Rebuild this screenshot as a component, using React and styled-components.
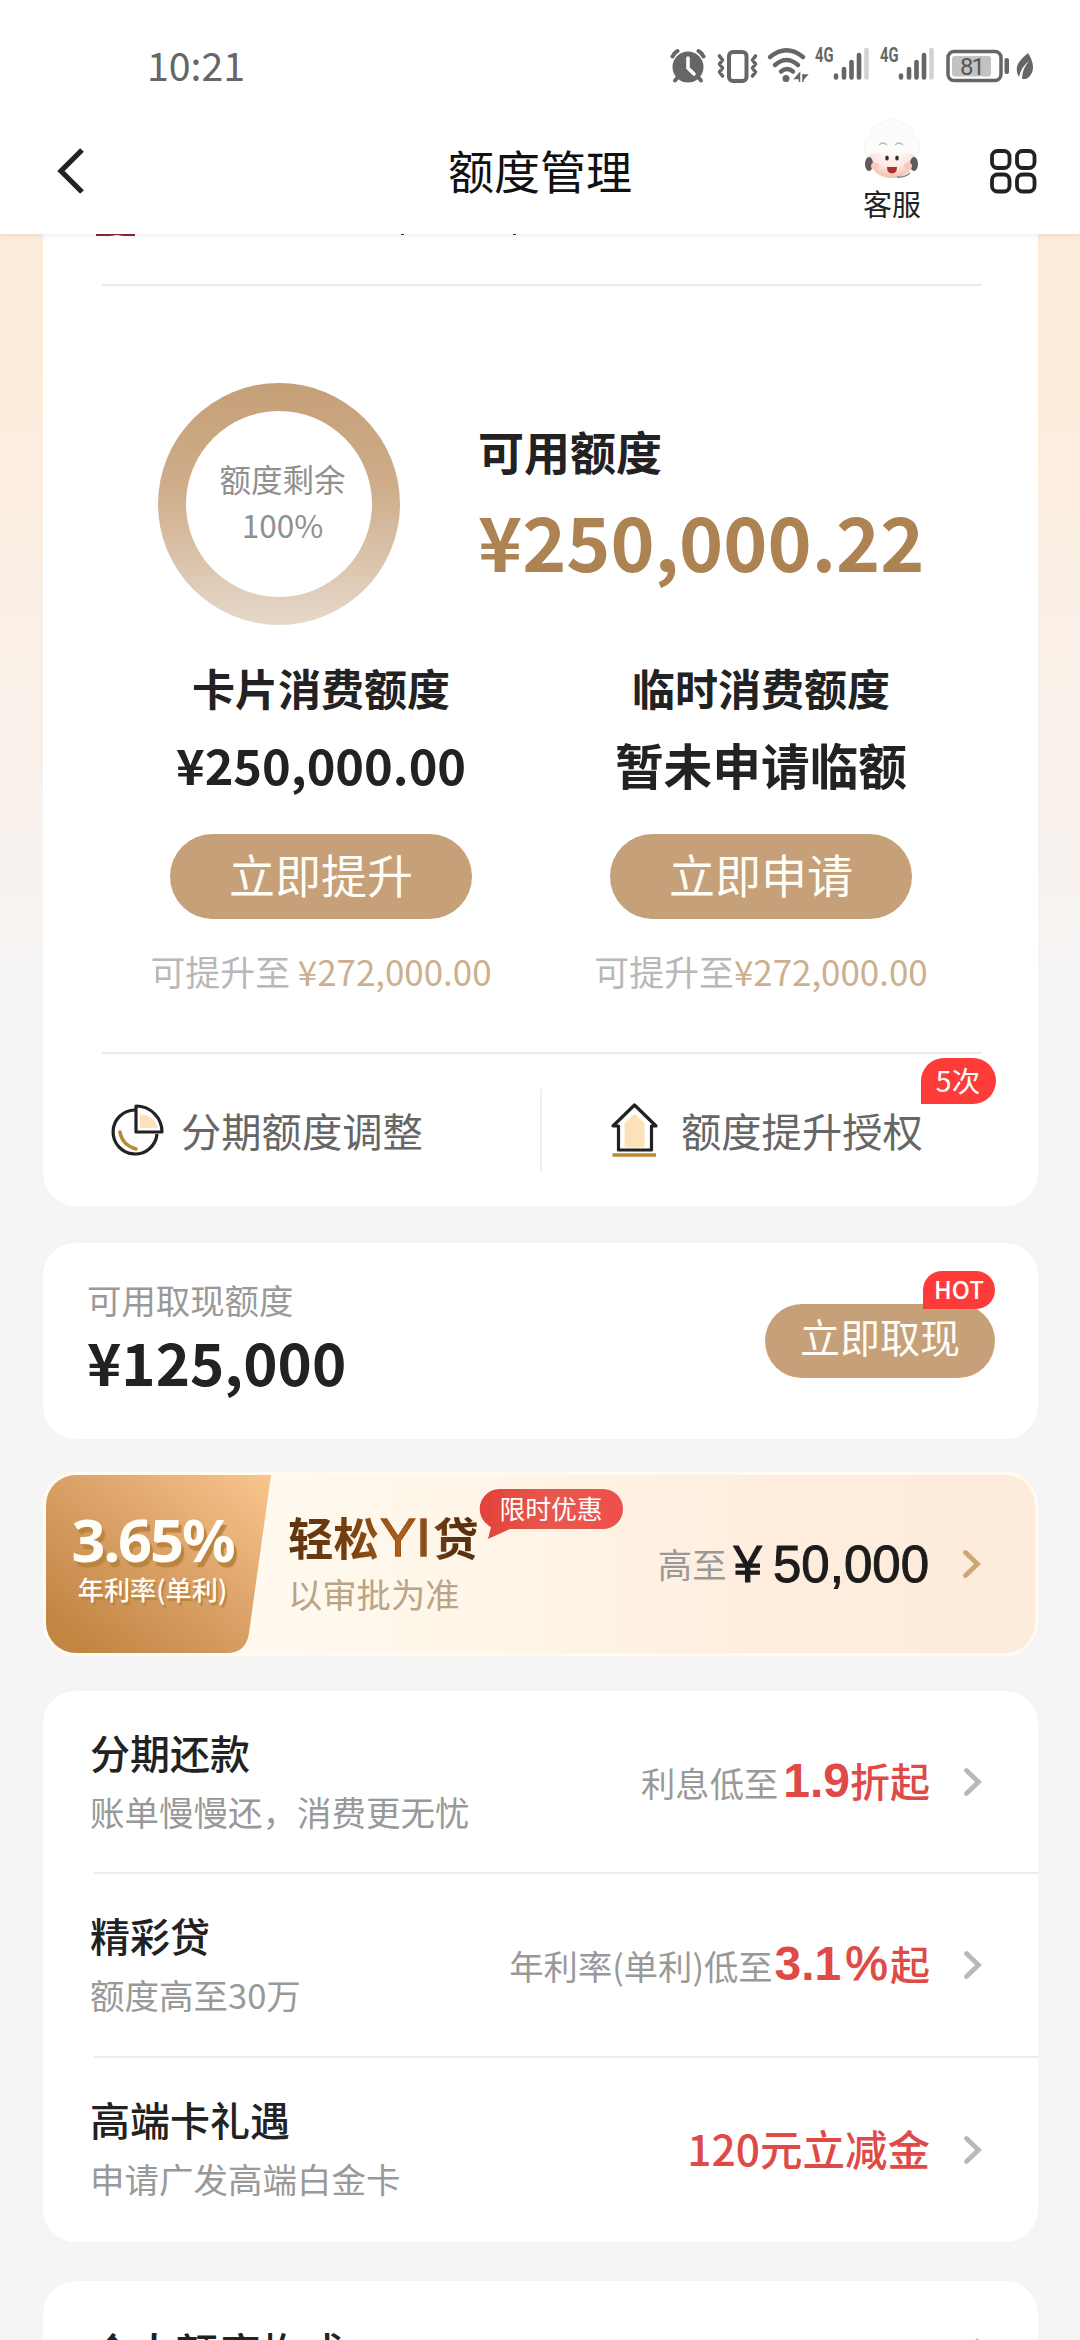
import React from 'react';
import styled, { createGlobalStyle, css } from 'styled-components';

const Global = createGlobalStyle`
  * { box-sizing: border-box; }
  html, body { margin: 0; padding: 0; }
  body { width: 1080px; height: 2340px; overflow: hidden; background: #f5f5f5; }
`;

const sans = `"Noto Sans CJK SC", "Noto Sans", sans-serif`;
const helv = `"Liberation Sans", "Noto Sans CJK SC", sans-serif`;

const Screen = styled.div`
  width: 1080px;
  height: 2340px;
  overflow: hidden;
  display: flex;
  flex-direction: column;
  font-family: ${sans};
  color: #222;
  background: linear-gradient(180deg, #fcead9 0, #fdecdc 400px, #faf0e8 640px, #f9f0ea 760px, #f5f5f5 1010px);
`;

const Top = styled.header`
  flex: none;
  height: 234px;
  background: #fff;
  z-index: 1;
  box-shadow: 0 1px 8px rgba(0, 0, 0, 0.08);
`;

const StatusBar = styled.div`
  height: 108px;
  padding: 24px 44px 0 147px;
  display: flex;
  justify-content: space-between;
`;

const Clock = styled.div`
  font-family: "Noto Sans CJK SC", sans-serif;
  font-size: 39.3px;
  line-height: 80px;
  height: 80px;
  color: #666;
`;

const StatusIcons = styled.svg`
  width: 366px;
  height: 60px;
  margin-top: 14px;
`;

const NavBar = styled.div`
  height: 126px;
  display: grid;
  grid-template-columns: 1fr 240px 1fr;
  align-items: center;
`;

const Back = styled.svg`
  width: 32px;
  height: 50px;
  margin: 0 0 0 54px;
`;

const PageTitle = styled.div`
  text-align: center;
  font-size: 46px;
  line-height: 60px;
  padding-bottom: 5px;
  color: #111;
`;

const NavActions = styled.div`
  display: flex;
  justify-content: flex-end;
  align-items: center;
  gap: 66px;
  padding-right: 43px;
`;

const Service = styled.div`
  width: 62px;
  height: 108px;
  display: flex;
  flex-direction: column;
  align-items: center;
  font-size: 29px;
  line-height: 40px;
  color: #222;
  white-space: nowrap;
`;

const MascotArt = styled.svg`
  display: block;
  flex: none;
  width: 62px;
  height: 66px;
`;

const Body = styled.main`
  flex: 1;
  min-height: 0;
  padding: 0 42px 0 43px;
  display: flex;
  flex-direction: column;
`;

const Card = styled.section`
  flex: none;
  background: #fff;
  border-radius: ${p => (p.$flat ? '0 0 33px 33px' : '33px')};
  height: ${p => p.$h}px;
  margin-bottom: ${p => p.$gap}px;
`;

const Peek = styled.div`
  height: 50px;
  svg { display: block; }
`;

const Rule = styled.div`
  height: 2px;
  background: #ebebeb;
  margin: 0 56px 0 59px;
`;

const Overview = styled.div`
  height: 369px;
  padding: 97px 0 0 115px;
  display: flex;
`;

const Ring = styled.div`
  flex: none;
  width: 242px;
  height: 242px;
  padding: 28px;
  border-radius: 50%;
  background: linear-gradient(180deg, #c59f77 0%, #cfae8c 45%, #e6d8ca 100%);
`;

const RingHole = styled.div`
  width: 186px;
  height: 186px;
  border-radius: 50%;
  background: #fff;
  padding: 44px 0 0 7px;
  text-align: center;
  font-size: 31.5px;
  line-height: 46px;
  color: #909090;
`;

const Available = styled.div`
  padding: 32px 0 0 78px;
`;

const AvailableLabel = styled.div`
  font-size: 46px;
  font-weight: 700;
  line-height: 70px;
`;

const AvailableSum = styled.div`
  font-size: 74.9px;
  font-weight: 700;
  line-height: 112px;
  margin-top: -1px;
  color: #ad8354;
`;

const Limits = styled.div`
  height: 397px;
  padding: 0 57px 0 58px;
  display: grid;
  grid-template-columns: 440px 440px;
`;

const Limit = styled.div`
  display: flex;
  flex-direction: column;
  align-items: center;
`;

const LimitName = styled.div`
  font-size: 43px;
  font-weight: 700;
  line-height: 64px;
`;

const LimitValue = styled.div`
  font-size: 48.7px;
  font-weight: 700;
  line-height: 72px;
  margin-top: 9px;
`;

const Pill = styled.div`
  border-radius: 50px;
  background: #c5a079;
  color: #fffdf6;
  text-align: center;
  ${p => p.$small
    ? css`width: 230px; height: 74px; font-size: 40px; line-height: 65px;`
    : css`width: 302px; height: 85px; font-size: 46px; line-height: 79px; margin-top: 34px;`}
`;

const Note = styled.div`
  font-size: 34.9px;
  line-height: 50px;
  margin-top: 27px;
  color: #b8b8b8;
  white-space: pre;
  b { font-weight: 400; color: #cbb08f; }
`;

const Shortcuts = styled.div`
  height: 152px;
  display: flex;
  align-items: center;
  position: relative;
`;

const Shortcut = styled.div`
  display: flex;
  align-items: center;
  padding-left: ${p => p.$left}px;
  width: ${p => p.$w}px;
  gap: ${p => p.$gap}px;
  font-size: 40.3px;
  line-height: 60px;
  color: #666;
  white-space: nowrap;
`;

const VRule = styled.div`
  width: 2px;
  height: 82px;
  background: #efefef;
`;

const Badge = styled.div`
  position: absolute;
  right: ${p => p.$right}px;
  top: ${p => p.$top}px;
  width: ${p => p.$w}px;
  height: ${p => p.$h}px;
  line-height: ${p => p.$h - 2}px;
  font-size: ${p => p.$size}px;
  font-weight: ${p => p.$weight || 400};
  text-align: center;
  color: #fff;
  background: #fd3b39;
  border-radius: 23px 23px 23px 0;
`;

const CashRow = styled.div`
  height: 100%;
  display: flex;
  justify-content: space-between;
  padding: 32px 43px 0 44px;
  position: relative;
`;

const CashLabel = styled.div`
  font-size: 34.4px;
  line-height: 48px;
  color: #999;
`;

const CashSum = styled.div`
  font-size: 58.2px;
  font-weight: 700;
  line-height: 76px;
`;

const CashAction = styled.div`
  padding-top: 29px;
`;

const Promo = styled(Card)`
  background: linear-gradient(90deg, #fffaf0 20%, #fff4e6 50%, #feeddd 75%, #fdebdb 100%);
  border: 3px solid #fffaf2;
  display: flex;
  position: relative;
  overflow: hidden;
`;

const Rate = styled.div`
  width: 225px;
  flex: none;
  display: grid;
  > * { grid-area: 1 / 1; }
  svg { display: block; }
`;

const RateText = styled.div`
  padding: 32px 12px 0 0;
  text-align: center;
  color: #fffdf8;
  z-index: 1;
`;

const RateValue = styled.div`
  font-family: "Noto Sans", "Open Sans", sans-serif;
  font-weight: 700;
  font-size: 59.5px;
  line-height: 64px;
  letter-spacing: -2.1px;
  text-shadow: 3px 5px 1px #bb8440;
`;

const RateName = styled.div`
  font-size: 26.2px;
  font-weight: 500;
  line-height: 36px;
  text-shadow: 2px 3px 1px #bb8440;
`;

const PromoText = styled.div`
  padding: 28px 0 0 17px;
`;

const PromoName = styled.div`
  font-size: 45.5px;
  font-weight: 700;
  line-height: 66px;
  height: 66px;
  white-space: nowrap;
  background: linear-gradient(90deg, #5e340f, #723f11 30%, #ad611f 60%, #5c3110 85%);
  background-clip: text;
  -webkit-background-clip: text;
  color: transparent;
  span {
    font-family: ${helv};
    font-weight: 400;
    font-size: 54px;
    line-height: 1;
    margin: 0 2px 0 1px;
    -webkit-text-stroke: 1px #9a5419;
  }
`;

const PromoSub = styled.div`
  font-size: 34.3px;
  line-height: 48px;
  color: #b9a485;
`;

const Bubble = styled.div`
  position: absolute;
  left: 433px;
  top: 14px;
  width: 144px;
  height: 50px;
  display: grid;
  text-align: center;
  font-size: 25.8px;
  line-height: 38px;
  color: #fff;
  > * { grid-area: 1 / 1; }
  span { z-index: 1; }
`;

const Trail = styled.div`
  margin-left: auto;
  display: flex;
  align-items: center;
  gap: ${p => p.$gap || 0}px;
  padding-right: ${p => p.$pr}px;
  white-space: nowrap;
`;

const Amount = styled.div`
  display: flex;
  align-items: ${p => (p.$center ? 'center' : 'baseline')};
  font-size: 34.3px;
  line-height: 60px;
  padding-bottom: ${p => p.$lift || 0}px;
  color: #999;
`;

const Big = styled.span`
  font-family: ${helv};
  font-size: 51px;
  color: #1c1c1c;
  -webkit-text-stroke: 1px #1c1c1c;
  margin-left: 7px;
  padding-top: 4px;
  word-spacing: -3px;
`;

const Hot = styled.span`
  font-family: ${p => (p.$cjk ? sans : helv)};
  font-size: ${p => p.$size || 40}px;
  font-weight: 500;
  color: #df4a46;
  margin-left: ${p => p.$ml || 0}px;
  em { font-style: normal; font-size: 48px; font-weight: 700; }
  i {
    font-style: normal;
    font-size: 48px;
    font-weight: 400;
    margin: 0 2px 0 4px;
    -webkit-text-stroke: 1px #df4a46;
  }
`;

const Row = styled.div`
  height: ${p => p.$h}px;
  margin-left: 51px;
  display: flex;
  border-bottom: ${p => (p.$last ? 0 : 2)}px solid #ededed;
`;

const RowText = styled.div`
  padding-top: 31px;
  margin-left: -4px;
`;

const RowTitle = styled.div`
  font-size: 40px;
  font-weight: 500;
  line-height: 60px;
  color: #222;
`;

const RowSub = styled.div`
  font-size: 34.5px;
  line-height: 59px;
  color: #999;
`;

const LastRow = styled.div`
  display: flex;
  justify-content: space-between;
  padding: 38px 44px 0 48px;
  font-size: 42.3px;
  font-weight: 500;
  line-height: 64px;
`;

const Chevron = ({ color = '#b9b9b9' }) => (
  <svg width="20" height="30" viewBox="0 0 20 30" fill="none">
    <path d="M3.500 3.500 15.500 15 3.500 26.500" stroke={color} strokeWidth="4.800" strokeLinecap="round" />
  </svg>
);

const Signal = ({ x }) => (
  <g transform={`translate(${x} 0)`}>
    <text x="-18" y="24" fontFamily="Roboto, sans-serif" fontWeight="700" fontSize="20.500" textLength="18.500" lengthAdjust="spacingAndGlyphs" fill="#666">4G</text>
    <g strokeWidth="4.600" strokeLinecap="round" stroke="#666">
      <path d="M3 37.500v2M11 31v8.500M18.500 24v15.500M26 17v22.500" />
      <path d="M33.500 12v27.500" stroke="#d2d2d2" />
    </g>
  </g>
);

const Status = () => (
  <StatusIcons viewBox="670 38 366 60" fill="none">
    <g transform="translate(1 38)">
      <circle cx="687" cy="29" r="15.500" fill="#666" />
      <path d="M687 20v10l6 6" stroke="#fff" strokeWidth="3.600" strokeLinecap="round" />
      <path d="M671.500 18.500q1.500-3.500 5-5.500M702.500 18.500q-1.500-3.500-5-5.500" stroke="#666" strokeWidth="4" strokeLinecap="round" />
      <path d="M677 39l-3 3.500M697 39l3 3.500" stroke="#666" strokeWidth="4" strokeLinecap="round" />
      <rect x="728" y="14" width="17.500" height="29" rx="4" stroke="#666" strokeWidth="4" />
      <path d="M718.500 18l3 4-3 4 3 4-3 4 3 4M754.500 18l-3 4 3 4-3 4 3 4-3 4" stroke="#666" strokeWidth="3.600" strokeLinecap="round" strokeLinejoin="round" />
      <g stroke="#666" strokeWidth="4.400" strokeLinecap="round">
        <path d="M769 19q16.500-13.500 33 0M774 27q11.500-10 23 0M780 33.500q6-5 12 0" />
      </g>
      <circle cx="785" cy="40.500" r="3.500" fill="#666" />
      <path d="M798.500 35v9M794 40.500h4.500v-5zM802 44v-8M802 37h4l-4 4.500z" fill="#666" stroke="#666" strokeWidth="1.500" />
    </g>
    <g transform="translate(0 38)">
      <Signal x={833} />
      <Signal x={898} />
      <rect x="948" y="13.500" width="53" height="29" rx="6" stroke="#666" strokeWidth="3.500" />
      <rect x="952" y="18" width="39" height="20.500" rx="3" fill="#c2c2c2" />
      <text x="960" y="37" fontFamily="Roboto, sans-serif" fontWeight="400" fontSize="24" textLength="25" fill="#555">81</text>
      <rect x="1004.500" y="20" width="4.500" height="16" rx="2" fill="#666" />
      <path d="M1028 15c6 9 8 20-2 26h-4q0-10 7-18-8 6-10 16c-6-11 1-17 9-24z" fill="#666" />
    </g>
  </StatusIcons>
);

const Mascot = () => (
  <MascotArt viewBox="0 3 62 66">
    <defs>
      <radialGradient id="face" cx="50%" cy="30%" r="70%">
        <stop offset="0" stopColor="#fffaf8" />
        <stop offset="0.600" stopColor="#fdeae3" />
        <stop offset="1" stopColor="#f3bfae" />
      </radialGradient>
    </defs>
    <ellipse cx="31" cy="44" rx="23" ry="20" fill="url(#face)" />
    <path d="M7 43C0 35 4 26 9 23 7 14 15 9 21 10 25 3 37 3 41 10c7-1 14 5 12 13 6 4 8 13 2 20-3-4-8-4-11-4-9 4-18 4-26 0-4 0-8 0-11 4z" fill="#fefcfb" stroke="#f9f3f2" strokeWidth="1" />
    <path d="M18 31q4-4 8 0M34 31q4-4 8 0" fill="none" stroke="#bbb" strokeWidth="1.300" />
    <ellipse cx="8" cy="50" rx="4" ry="7" fill="#5d5b60" />
    <ellipse cx="53" cy="50" rx="4" ry="7" fill="#5d5b60" />
    <ellipse cx="14" cy="52" rx="4" ry="3.500" fill="#f9c9bf" />
    <ellipse cx="47" cy="52" rx="4" ry="3.500" fill="#f9c9bf" />
    <ellipse cx="26" cy="44" rx="1.800" ry="2.500" fill="#333" />
    <ellipse cx="36" cy="44" rx="1.800" ry="2.500" fill="#333" />
    <path d="M26 53h10q0 6.500-5 6.500t-5-6.500z" fill="#a9302c" />
    <path d="M36 63q7 1 13-4" stroke="#888" strokeWidth="1.500" fill="none" />
  </MascotArt>
);

const rows = [
  { title: '分期还款', sub: '账单慢慢还，消费更无忧', h: 183, value: <>利息低至<Hot $ml={5}><em>1.9</em>折起</Hot></> },
  { title: '精彩贷', sub: '额度高至30万', h: 184, value: <>年利率(单利)低至<Hot $ml={2}><em>3.1</em><i>%</i>起</Hot></> },
  { title: '高端卡礼遇', sub: '申请广发高端白金卡', h: 184, last: true, lift: 5, value: <Hot $cjk $size={42.5}>120元立减金</Hot> },
];

export default function App() {
  return (
    <>
      <Global />
      <Screen>
        <Top>
          <StatusBar>
            <Clock>10:21</Clock>
            <Status />
          </StatusBar>
          <NavBar>
            <Back viewBox="0 0 32 50" fill="none">
              <path d="M28 4 7 25 28 46" stroke="#222" strokeWidth="5.300" />
            </Back>
            <PageTitle>额度管理</PageTitle>
            <NavActions>
              <Service>
                <Mascot />
                客服
              </Service>
              <svg width="48" height="46" viewBox="0 0 48 46" fill="none" stroke="#222" strokeWidth="3.800">
                <rect x="3" y="3" width="17.500" height="17" rx="5.500" />
                <rect x="28" y="3" width="17.500" height="17" rx="5.500" />
                <rect x="3" y="26.500" width="17.500" height="17" rx="5.500" />
                <rect x="28" y="26.500" width="17.500" height="17" rx="5.500" />
              </svg>
            </NavActions>
          </NavBar>
        </Top>
        <Body>
          <Card $flat $h={972} $gap={37}>
            <Peek>
              <svg width="500" height="4" viewBox="0 0 500 4">
                <path d="M53 0h39v2H80l-6-1-7 1H53z" fill="#8e2530" />
                <rect x="358" width="3" height="1" fill="#333" />
                <rect x="470" width="3" height="1" fill="#333" />
              </svg>
            </Peek>
            <Rule />
            <Overview>
              <Ring><RingHole>额度剩余<br />100%</RingHole></Ring>
              <Available>
                <AvailableLabel>可用额度</AvailableLabel>
                <AvailableSum>¥250,000.22</AvailableSum>
              </Available>
            </Overview>
            <Limits>
              <Limit>
                <LimitName>卡片消费额度</LimitName>
                <LimitValue>¥250,000.00</LimitValue>
                <Pill>立即提升</Pill>
                <Note>可提升至 <b>¥272,000.00</b></Note>
              </Limit>
              <Limit>
                <LimitName>临时消费额度</LimitName>
                <LimitValue>暂未申请临额</LimitValue>
                <Pill>立即申请</Pill>
                <Note>可提升至<b>¥272,000.00</b></Note>
              </Limit>
            </Limits>
            <Rule />
            <Shortcuts>
              <Shortcut $left={68} $w={497} $gap={16}>
                <svg width="54" height="54" viewBox="0 0 54 54" fill="none">
                  <path d="M24 7A22 22 0 1 0 46 31" stroke="#222" strokeWidth="3.200" />
                  <path d="M25 3v26h26A26 26 0 0 0 25 3z" stroke="#222" strokeWidth="3.200" strokeLinejoin="round" />
                  <path d="M29 11v14h18A20 20 0 0 0 29 11z" fill="#fde1b8" />
                  <path d="M9 29q2 13 16 17" stroke="#b98a34" strokeWidth="3.400" strokeLinecap="round" />
                </svg>
                分期额度调整
              </Shortcut>
              <VRule />
              <Shortcut $left={67} $w={440} $gap={22}>
                <svg width="50" height="56" viewBox="0 0 50 56" fill="none">
                  <path d="M25.500 3 4 24h5.500v24h33V24H47z" stroke="#222" strokeWidth="3.200" strokeLinejoin="round" />
                  <path d="M25.500 12 15.500 21v24.500h20V21z" fill="#fde1b8" />
                  <path d="M3.500 53h43.500" stroke="#b98a34" strokeWidth="3.600" />
                </svg>
                额度提升授权
              </Shortcut>
              <Badge $right={42.5} $top={4} $w={75} $h={46} $size={28.5}>5次</Badge>
            </Shortcuts>
          </Card>

          <Card $h={196} $gap={33}>
            <CashRow>
              <div>
                <CashLabel>可用取现额度</CashLabel>
                <CashSum>¥125,000</CashSum>
              </div>
              <CashAction><Pill $small>立即取现</Pill></CashAction>
              <Badge $right={43} $top={28} $w={72} $h={38} $size={24} $weight={500}>HOT</Badge>
            </CashRow>
          </Card>

          <Promo $h={184} $gap={35}>
            <Rate>
              <svg width="225" height="178" viewBox="0 0 225 178">
                <defs>
                  <linearGradient id="gold" x1="0" y1="1" x2="1" y2="0">
                    <stop offset="0.100" stopColor="#c28643" />
                    <stop offset="0.550" stopColor="#dca369" />
                    <stop offset="1" stopColor="#f8c68e" />
                  </linearGradient>
                </defs>
                <path d="M0 0h225l-22 158q-3 20-22 20H0z" fill="url(#gold)" />
              </svg>
              <RateText>
                <RateValue>3.65%</RateValue>
                <RateName>年利率(单利)</RateName>
              </RateText>
            </Rate>
            <PromoText>
              <PromoName>轻松<span>YI</span>贷</PromoName>
              <PromoSub>以审批为准</PromoSub>
            </PromoText>
            <Bubble>
              <svg width="144" height="50" viewBox="0 0 144 50">
                <defs>
                  <linearGradient id="red" x1="0" x2="1">
                    <stop offset="0" stopColor="#e2423a" />
                    <stop offset="0.500" stopColor="#e8584c" />
                    <stop offset="1" stopColor="#ee4f4b" />
                  </linearGradient>
                </defs>
                <path d="M20 0h104a20 20 0 0 1 0 40H31L9 50l3-12A20 20 0 0 1 20 0z" fill="url(#red)" />
              </svg>
              <span>限时优惠</span>
            </Bubble>
            <Trail $gap={33} $pr={53}>
              <Amount $center $lift={2}>高至<Big>¥ 50,000</Big></Amount>
              <Chevron color="#cda876" />
            </Trail>
          </Promo>

          <Card $h={551} $gap={39}>
            {rows.map(r => (
              <Row key={r.title} $h={r.h} $last={r.last}>
                <RowText>
                  <RowTitle>{r.title}</RowTitle>
                  <RowSub>{r.sub}</RowSub>
                </RowText>
                <Trail $gap={33} $pr={55}>
                  <Amount $lift={r.lift}>{r.value}</Amount>
                  <Chevron />
                </Trail>
              </Row>
            ))}
          </Card>

          <Card $h={200} $gap={0}>
            <LastRow>
              <span>个人额度构成</span>
              <svg width="34" height="42" viewBox="0 0 34 42" fill="none">
                <path d="M5 34 17 22 29 34" stroke="#b9b9b9" strokeWidth="4" strokeLinecap="round" />
              </svg>
            </LastRow>
          </Card>
        </Body>
      </Screen>
    </>
  );
}
